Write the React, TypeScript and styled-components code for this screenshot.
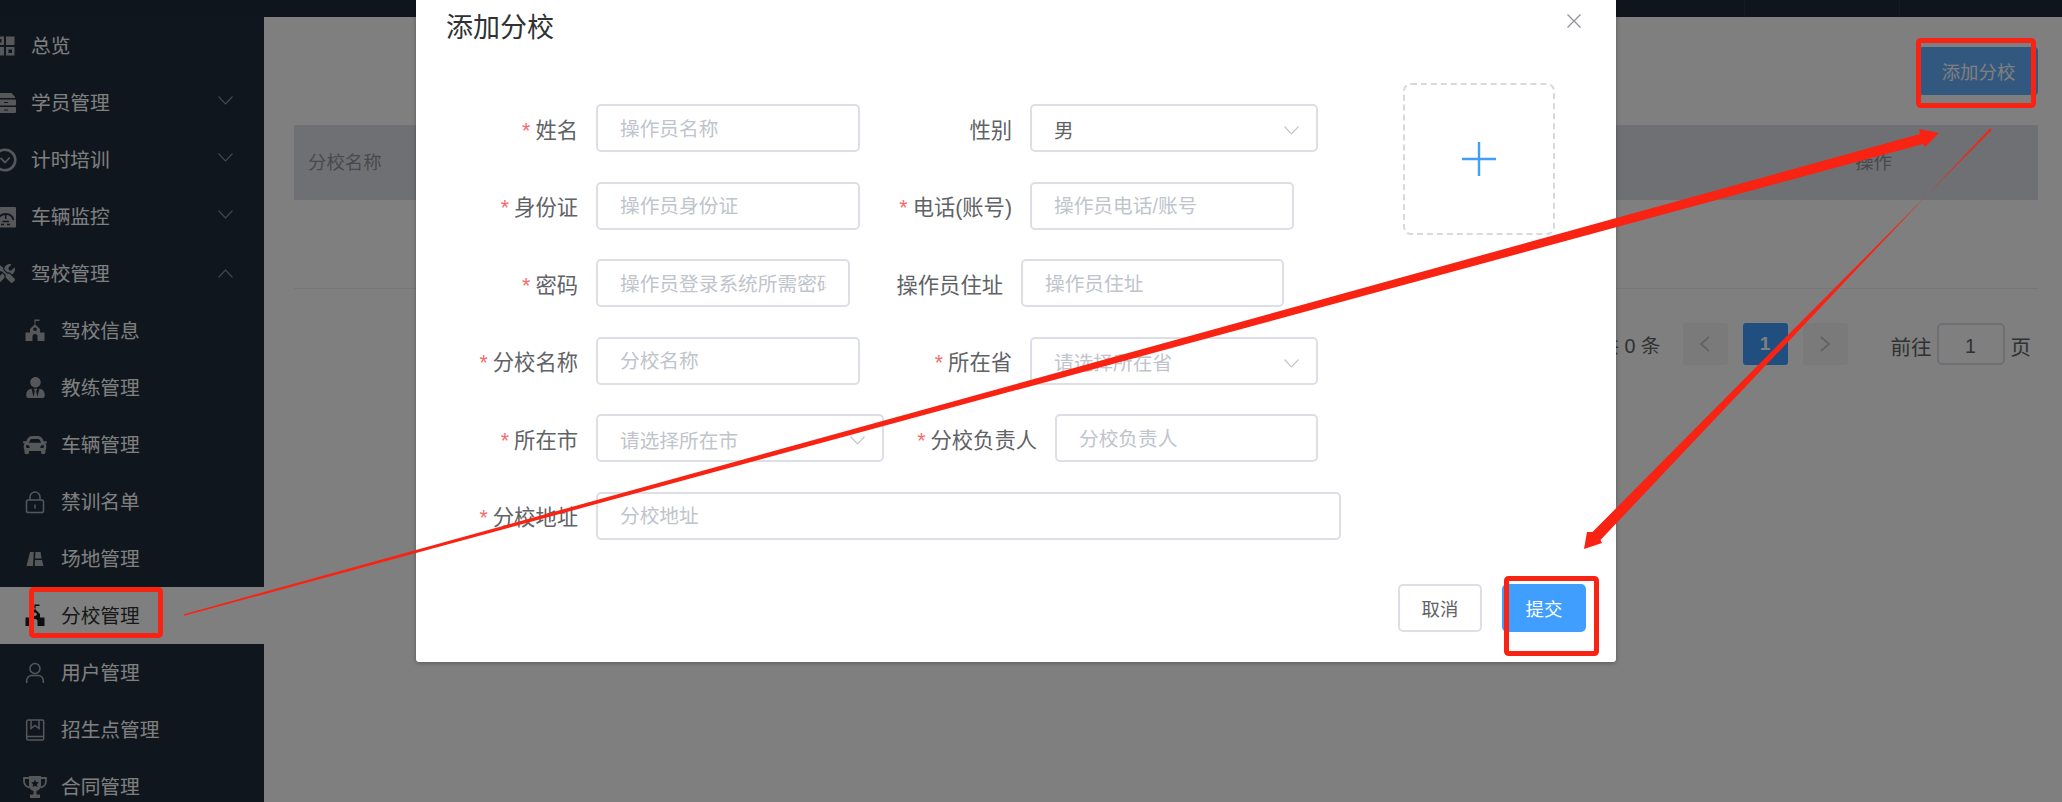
import React from "react";
import styled, { createGlobalStyle } from "styled-components";
import { FaCar, FaTools, FaUserTie } from "react-icons/fa";

const Global = createGlobalStyle`
  html, body { margin: 0; padding: 0; width: 2062px; height: 802px; overflow: hidden; }
  * { box-sizing: border-box; }
  body { font-family: "Liberation Sans", "Noto Sans CJK SC", sans-serif; background: #fff; }
`;

const Page = styled.div`
  position: relative;
  width: 2062px;
  height: 802px;
  overflow: hidden;
  display: flex;
  flex-direction: column;
  background: #fff;
`;
const TopBar = styled.div`
  height: 17px;
  flex: none;
  background: #1d2b3a;
  display: flex;
  justify-content: flex-end;
`;
const TopTab = styled.div<{ $w: number }>`
  width: ${(p) => p.$w}px;
  border-left: 1px solid #2a3848;
`;
const Body = styled.div`
  flex: 1;
  display: flex;
  min-height: 0;
`;
const Sidebar = styled.nav`
  width: 264px;
  flex: none;
  background: #1f2d3d;
  overflow: hidden;
`;
const NavRow = styled.div<{ $sub?: boolean; $active?: boolean }>`
  height: 57px;
  display: flex;
  align-items: center;
  gap: 14px;
  padding-left: ${(p) => (p.$sub ? 23 : 0)}px;
  padding-right: 31px;
  background: ${(p) => (p.$active ? "#fff" : "transparent")};
  color: ${(p) => (p.$active ? "#303133" : "#fff")};
  font-size: 19.7px;
`;
const NavIcon = styled.span<{ $sub?: boolean; $active?: boolean }>`
  width: 24px;
  height: 24px;
  flex: none;
  margin-left: ${(p) => (p.$sub ? 0 : -7)}px;
  color: ${(p) => (p.$active ? "#1c1c1c" : "#aaaeb3")};
  display: flex;
  align-items: center;
  justify-content: center;
  svg { display: block; }
`;
const NavLabel = styled.span`
  flex: 1;
  white-space: nowrap;
  margin-bottom: 2px;
`;
const NavArrow = styled.span<{ $up?: boolean }>`
  display: flex;
  margin-bottom: ${(p) => (p.$up ? 0 : 4)}px;
`;
const Main = styled.main`
  flex: 1;
  background: #fff;
  padding: 30px 24px 0 30px;
  display: flex;
  flex-direction: column;
`;
const Toolbar = styled.div`
  display: flex;
  justify-content: flex-end;
`;
const AddButton = styled.button`
  width: 119px;
  height: 48px;
  border: 0;
  border-radius: 4px;
  background: #66b1ff;
  color: #fff;
  font: inherit;
  font-size: 18.4px;
`;
const TableHead = styled.div`
  margin-top: 30px;
  height: 75px;
  background: #dfe0e6;
  display: flex;
  align-items: center;
  justify-content: space-between;
  padding: 0 146px 3px 14px;
  color: #909399;
  font-size: 18.4px;
`;
const TableEmpty = styled.div`
  height: 89px;
  border-bottom: 1px solid #ebeef5;
`;
const Pager = styled.div`
  margin-top: 34px;
  padding-right: 7px;
  display: flex;
  justify-content: flex-end;
  align-items: center;
  color: #606266;
  font-size: 19.7px;
`;
const PagerTotal = styled.span`
  margin-right: 22px;
  white-space: nowrap;
`;
const PageBtn = styled.div<{ $active?: boolean }>`
  width: 45px;
  height: 42px;
  margin-right: 15px;
  border-radius: 3px;
  background: ${(p) => (p.$active ? "#409eff" : "#f4f4f5")};
  color: ${(p) => (p.$active ? "#fff" : "#c0c4cc")};
  font-weight: 700;
  font-size: 19px;
  display: flex;
  align-items: center;
  justify-content: center;
`;
const JumpText = styled.span<{ $ml?: number }>`
  margin-left: ${(p) => p.$ml ?? 0}px;
  padding-top: 4px;
  font-size: 20.5px;
`;
const JumpBox = styled.div`
  width: 68px;
  height: 42px;
  margin-left: 5px;
  margin-right: 6px;
  padding-top: 4px;
  border: 2px solid #dcdfe6;
  border-radius: 5px;
  display: flex;
  align-items: center;
  justify-content: center;
`;

const Overlay = styled.div`
  position: absolute;
  inset: 0;
  background: rgba(0, 0, 0, 0.5);
`;
const Modal = styled.div`
  margin-left: 416px;
  width: 1200px;
  height: 662px;
  background: #fff;
  border-radius: 0 0 3px 3px;
  box-shadow: 0 1px 4px rgba(0, 0, 0, 0.3);
  display: flex;
  flex-direction: column;
`;
const ModalHeader = styled.header`
  height: 83px;
  flex: none;
  padding: 10px 35px 0 30px;
  display: flex;
  justify-content: space-between;
  align-items: flex-start;
`;
const Title = styled.h2`
  margin: 0;
  font-size: 27px;
  font-weight: 400;
  line-height: 36px;
  color: #303133;
`;
const CloseIcon = styled.svg`
  width: 14px;
  height: 14px;
  margin-top: 4px;
  color: #909399;
`;
const ModalBody = styled.div`
  flex: 1;
  padding: 0 61px 0 30px;
  display: flex;
  justify-content: space-between;
`;
const FormCol = styled.div`
  padding-top: 21px;
  display: flex;
  flex-direction: column;
  gap: 29.6px;
`;
const FormRow = styled.div`
  display: flex;
  height: 48px;
`;
const Field = styled.div`
  display: flex;
  align-items: center;
`;
const Label = styled.label<{ $w: number; $req?: boolean }>`
  width: ${(p) => p.$w}px;
  padding-right: 18px;
  text-align: right;
  font-size: 21.3px;
  color: #606266;
  white-space: nowrap;
  &::before {
    content: ${(p) => (p.$req ? '"*"' : '""')};
    color: #f56c6c;
    margin-right: 5px;
  }
`;
const TextInput = styled.input<{ $w: number }>`
  width: ${(p) => p.$w}px;
  height: 48px;
  padding: 2px 22px 0;
  border: 2px solid #dcdfe6;
  border-radius: 5px;
  outline: 0;
  background: #fff;
  font-family: inherit;
  font-size: 19.7px;
  color: #606266;
  &::placeholder { color: #c0c4cc; opacity: 1; }
`;
const SelectBox = styled.div<{ $w: number; $empty?: boolean }>`
  width: ${(p) => p.$w}px;
  height: 48px;
  padding: 2px 17px 0 22px;
  border: 2px solid #dcdfe6;
  border-radius: 5px;
  display: flex;
  align-items: center;
  justify-content: space-between;
  font-size: 19.7px;
  color: ${(p) => (p.$empty ? "#c0c4cc" : "#606266")};
  svg { color: #c0c4cc; margin-top: 3px; }
`;
const Upload = styled.div`
  width: 152px;
  height: 152px;
  border: 2px dashed #d9d9d9;
  border-radius: 8px;
  display: flex;
  align-items: center;
  justify-content: center;
  color: #409eff;
`;
const ModalFooter = styled.footer`
  padding: 0 30px 30px;
  display: flex;
  justify-content: flex-end;
  gap: 20px;
`;
const FootBtn = styled.button<{ $primary?: boolean }>`
  width: 84px;
  height: 48px;
  border-radius: 5px;
  border: 2px solid ${(p) => (p.$primary ? "#409eff" : "#dcdfe6")};
  background: ${(p) => (p.$primary ? "#409eff" : "#fff")};
  color: ${(p) => (p.$primary ? "#fff" : "#606266")};
  font-family: inherit;
  font-size: 18.4px;
`;
const Annotations = styled.svg`
  position: absolute;
  inset: 0;
  width: 2062px;
  height: 802px;
  pointer-events: none;
`;

const Icon: React.FC<{ children: React.ReactNode }> = ({ children }) => (
  <svg width="24" height="24" viewBox="0 0 24 24" fill="currentColor">
    {children}
  </svg>
);
const DARK = "#1f2d3d";

const GridIcon = () => (
  <Icon>
    <path fillRule="evenodd" d="M2.5 2.5H11V11H2.5zM5 5v3.5h3.5V5z" />
    <path d="M13 2.5h8.5V11H13zM2.5 13H11v8.5H2.5z" />
    <path fillRule="evenodd" d="M13 13h8.5v8.5H13zM15.5 15.5V19H19v-3.5z" />
  </Icon>
);
const DrawerIcon = () => (
  <Icon>
    <path d="M6 2h12.5l3.5 3.8V7H3V5.5C3 3.5 4.5 2 6 2z" />
    <path fillRule="evenodd" d="M4 8.5h18a1 1 0 0 1 1 1v4a1 1 0 0 1-1 1H4a1 1 0 0 1-1-1v-4a1 1 0 0 1 1-1zM11 11v1h4v-1z" />
    <path fillRule="evenodd" d="M4 16h18a1 1 0 0 1 1 1v4a1 1 0 0 1-1 1H4a1 1 0 0 1-1-1v-4a1 1 0 0 1 1-1zM11 18.5v1h4v-1z" />
  </Icon>
);
const ClockIcon = () => (
  <Icon>
    <circle cx="12" cy="12" r="10.3" fill="none" stroke="currentColor" strokeWidth="2.6" />
    <path d="M7.5 10l4.5 4.5 4.8-5" fill="none" stroke="currentColor" strokeWidth="1.8" />
  </Icon>
);
const GaugeIcon = () => (
  <Icon>
    <rect x="2.5" y="2" width="20.5" height="20.5" rx="1" />
    <path d="M5 15a8 8 0 0 1 15.5 0" fill="none" stroke={DARK} strokeWidth="1.8" />
    <path d="M12.7 9v5" stroke={DARK} strokeWidth="1.5" />
    <path d="M9.5 16.5h6.5M8 19.5h3M14 19.5h3" stroke={DARK} strokeWidth="1.5" />
  </Icon>
);
const SchoolIcon = () => (
  <Icon>
    <path d="M11.4 0.5h1.2v4h-1.2zM12 0.5h4.5v1.6H12z" />
    <path fillRule="evenodd" d="M12 5l5 5v3.5h4.5V22h-7v-4.5a2.5 2.5 0 0 0-5 0V22h-7v-8.5H7V10zM12 8.5a1.8 1.8 0 1 0 0 3.6 1.8 1.8 0 0 0 0-3.6z" />
  </Icon>
);
const LockIcon = () => (
  <Icon>
    <g fill="none" stroke="currentColor" strokeWidth="1.5">
      <rect x="3.5" y="10" width="17" height="12.5" rx="1.8" />
      <path d="M7 10V7a5 5 0 0 1 10 0v3M12 14.5v4" />
    </g>
  </Icon>
);
const RoadIcon = () => (
  <Icon>
    <path d="M7 5h3.8L10 19H3.5zM12.5 5h5l1.1 6.5H12zM12 13h7l1.5 6h-8.7z" />
  </Icon>
);
const UserIcon = () => (
  <Icon>
    <g fill="none" stroke="currentColor" strokeWidth="1.5">
      <circle cx="12" cy="7.5" r="5" />
      <path d="M3.7 22v-2.5a5 5 0 0 1 5-5h6.6a5 5 0 0 1 5 5V22" />
    </g>
  </Icon>
);
const BookIcon = () => (
  <Icon>
    <g fill="none" stroke="currentColor" strokeWidth="1.5">
      <rect x="3.7" y="2" width="17" height="20" rx="1.5" />
      <path d="M3.7 18.5h17M8 2v8.5l4-3 4 3V2" />
    </g>
  </Icon>
);
const TrophyIcon = () => (
  <Icon>
    <path d="M6 1h12v9.5a6 6 0 0 1-4.5 5.5v3.5H17V23H7v-3.5h3.5V16A6 6 0 0 1 6 10.5z" />
    <path d="M6 3H1v3c0 3.5 2.5 6 5.5 6.500M18 3h5v3c0 3.5-2.5 6-5.5 6.500" fill="none" stroke="currentColor" strokeWidth="1.8" />
    <path d="M12 4.5l1.2 2.6 2.8.3-2.1 1.9.6 2.8L12 10.7l-2.5 1.4.6-2.8L8 7.4l2.8-.3z" fill={DARK} />
  </Icon>
);
const Chevron: React.FC<{ up?: boolean; size?: number; stroke?: string }> = ({ up, size = 15, stroke = "currentColor" }) => (
  <svg width={size} height={Math.round(size * 0.6)} viewBox="0 0 15 9" fill="none">
    <path d={up ? "M0.5 8.5L7.5 1l7 7.5" : "M0.5 0.5L7.5 8l7-7.5"} stroke={stroke} strokeWidth="1.1" />
  </svg>
);
const SideArrow: React.FC<{ right?: boolean }> = ({ right }) => (
  <svg width="12" height="18" viewBox="0 0 12 18" fill="none">
    <path d={right ? "M2 2l8 7-8 7" : "M10 2L2 9l8 7"} stroke="currentColor" strokeWidth="1.8" />
  </svg>
);

type NavItem = { label: string; icon: React.ReactNode; sub?: boolean; active?: boolean; arrow?: "up" | "down" };
const navItems: NavItem[] = [
  { label: "总览", icon: <GridIcon /> },
  { label: "学员管理", icon: <DrawerIcon />, arrow: "down" },
  { label: "计时培训", icon: <ClockIcon />, arrow: "down" },
  { label: "车辆监控", icon: <GaugeIcon />, arrow: "down" },
  { label: "驾校管理", icon: <FaTools size={19} />, arrow: "up" },
  { label: "驾校信息", icon: <SchoolIcon />, sub: true },
  { label: "教练管理", icon: <FaUserTie size={21} />, sub: true },
  { label: "车辆管理", icon: <FaCar size={24} />, sub: true },
  { label: "禁训名单", icon: <LockIcon />, sub: true },
  { label: "场地管理", icon: <RoadIcon />, sub: true },
  { label: "分校管理", icon: <SchoolIcon />, sub: true, active: true },
  { label: "用户管理", icon: <UserIcon />, sub: true },
  { label: "招生点管理", icon: <BookIcon />, sub: true },
  { label: "合同管理", icon: <TrophyIcon />, sub: true },
];

const RED = "#f92314";

export default function App() {
  return (
    <Page>
      <Global />
      <TopBar>
        <TopTab $w={155} />
        <TopTab $w={163} />
      </TopBar>
      <Body>
        <Sidebar>
          {navItems.map((n) => (
            <NavRow key={n.label} $sub={n.sub} $active={n.active}>
              <NavIcon $sub={n.sub} $active={n.active}>{n.icon}</NavIcon>
              <NavLabel>{n.label}</NavLabel>
              {n.arrow && (
                <NavArrow $up={n.arrow === "up"}>
                  <Chevron up={n.arrow === "up"} stroke="#8a9099" />
                </NavArrow>
              )}
            </NavRow>
          ))}
        </Sidebar>
        <Main>
          <Toolbar>
            <AddButton>添加分校</AddButton>
          </Toolbar>
          <TableHead>
            <span>分校名称</span>
            <span>操作</span>
          </TableHead>
          <TableEmpty />
          <Pager>
            <PagerTotal>共 0 条</PagerTotal>
            <PageBtn><SideArrow /></PageBtn>
            <PageBtn $active>1</PageBtn>
            <PageBtn><SideArrow right /></PageBtn>
            <JumpText $ml={28}>前往</JumpText>
            <JumpBox>1</JumpBox>
            <JumpText>页</JumpText>
          </Pager>
        </Main>
      </Body>
      <Overlay>
        <Modal>
          <ModalHeader>
            <Title>添加分校</Title>
            <CloseIcon viewBox="0 0 14 14" fill="none">
              <path d="M0.5 0.5l13 13M13.5 0.5l-13 13" stroke="currentColor" strokeWidth="1.3" />
            </CloseIcon>
          </ModalHeader>
          <ModalBody>
            <FormCol>
              <FormRow>
                <Field>
                  <Label $w={150} $req>姓名</Label>
                  <TextInput $w={264} placeholder="操作员名称" readOnly />
                </Field>
                <Field>
                  <Label $w={170}>性别</Label>
                  <SelectBox $w={288}>男<Chevron /></SelectBox>
                </Field>
              </FormRow>
              <FormRow>
                <Field>
                  <Label $w={150} $req>身份证</Label>
                  <TextInput $w={264} placeholder="操作员身份证" readOnly />
                </Field>
                <Field>
                  <Label $w={170} $req>电话(账号)</Label>
                  <TextInput $w={264} placeholder="操作员电话/账号" readOnly />
                </Field>
              </FormRow>
              <FormRow>
                <Field>
                  <Label $w={150} $req>密码</Label>
                  <TextInput $w={254} placeholder="操作员登录系统所需密码" readOnly />
                </Field>
                <Field>
                  <Label $w={171}>操作员住址</Label>
                  <TextInput $w={263} placeholder="操作员住址" readOnly />
                </Field>
              </FormRow>
              <FormRow>
                <Field>
                  <Label $w={150} $req>分校名称</Label>
                  <TextInput $w={264} placeholder="分校名称" readOnly />
                </Field>
                <Field>
                  <Label $w={170} $req>所在省</Label>
                  <SelectBox $w={288} $empty>请选择所在省<Chevron /></SelectBox>
                </Field>
              </FormRow>
              <FormRow>
                <Field>
                  <Label $w={150} $req>所在市</Label>
                  <SelectBox $w={288} $empty>请选择所在市<Chevron /></SelectBox>
                </Field>
                <Field>
                  <Label $w={171} $req>分校负责人</Label>
                  <TextInput $w={263} placeholder="分校负责人" readOnly />
                </Field>
              </FormRow>
              <FormRow>
                <Field>
                  <Label $w={150} $req>分校地址</Label>
                  <TextInput $w={745} placeholder="分校地址" readOnly />
                </Field>
              </FormRow>
            </FormCol>
            <Upload>
              <svg width="34" height="34" viewBox="0 0 34 34" fill="none">
                <path d="M17 0v34M0 17h34" stroke="currentColor" strokeWidth="2.4" />
              </svg>
            </Upload>
          </ModalBody>
          <ModalFooter>
            <FootBtn>取消</FootBtn>
            <FootBtn $primary>提交</FootBtn>
          </ModalFooter>
        </Modal>
      </Overlay>
      <Annotations viewBox="0 0 2062 802">
        <g fill="none" stroke={RED} strokeWidth="5">
          <rect x="31.5" y="589.5" width="129" height="46" rx="2" />
          <rect x="1918.5" y="40.5" width="115" height="65" rx="2" />
          <rect x="1506.5" y="578.5" width="90" height="75" rx="2" />
        </g>
        <polygon fill={RED} points="184,614.2 1920,134 1919,129 1939,133 1925,147 1923,144 184.4,615.8" />
        <polygon fill={RED} points="1990.2,128.3 1600.5,540 1602,543 1584,549 1587,532 1592.5,532 1991.8,129.7" />
      </Annotations>
    </Page>
  );
}
